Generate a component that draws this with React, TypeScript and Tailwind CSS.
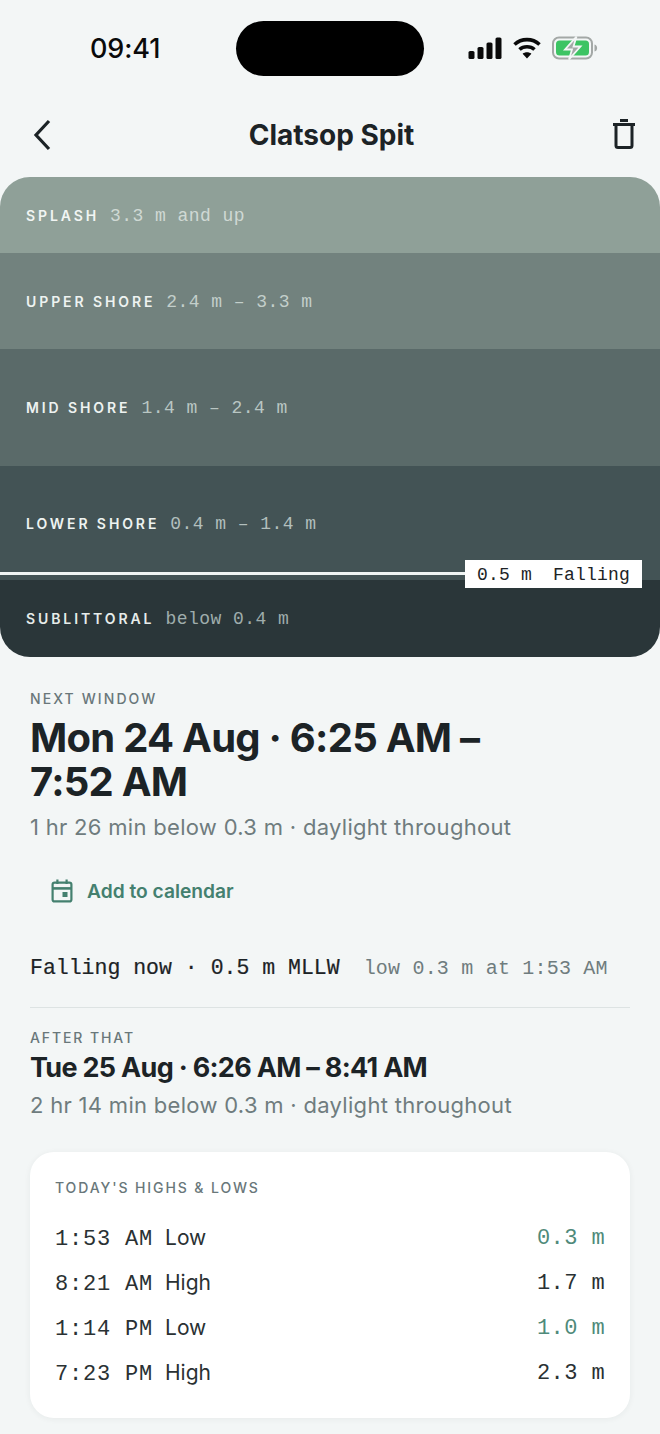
const mono = "font-['Liberation_Mono',monospace]"
const sans = "font-['Inter','Liberation_Sans',sans-serif]"

const zones = [
    { name: 'SPLASH', range: '3.3 m and up', h: 'h-[76px]', bg: 'bg-[#8fa098]', label: 'text-[#f1f5f3]', value: 'text-[#cfd9d4]' },
    { name: 'UPPER SHORE', range: '2.4 m – 3.3 m', h: 'h-[96px]', bg: 'bg-[#72827e]', label: 'text-[#eef3f1]', value: 'text-[#c3cfcb]' },
    { name: 'MID SHORE', range: '1.4 m – 2.4 m', h: 'h-[117px]', bg: 'bg-[#5a6a69]', label: 'text-[#eef3f1]', value: 'text-[#b9c6c3]' },
    { name: 'LOWER SHORE', range: '0.4 m – 1.4 m', h: 'h-[114px]', bg: 'bg-[#435355]', label: 'text-[#eef3f1]', value: 'text-[#b2bfbd]' },
    { name: 'SUBLITTORAL', range: 'below 0.4 m', h: 'h-[77px]', bg: 'bg-[#2a3639]', label: 'text-[#e6ecea]', value: 'text-[#9fadac]' },
]

const tides = [
    { time: '1:53 AM', kind: 'Low', height: '0.3 m', good: true },
    { time: '8:21 AM', kind: 'High', height: '1.7 m', good: false },
    { time: '1:14 PM', kind: 'Low', height: '1.0 m', good: true },
    { time: '7:23 PM', kind: 'High', height: '2.3 m', good: false },
]

function StatusIcons() {
    return (
        <div className="flex items-center gap-[11px]">
            <svg width="34" height="22" viewBox="0 0 34 22" fill="#0a0a0a">
                <rect x="0.5" y="14" width="6" height="8" rx="1.6" />
                <rect x="9.5" y="10" width="6" height="12" rx="1.6" />
                <rect x="18.5" y="5.5" width="6" height="16.5" rx="1.6" />
                <rect x="27.5" y="0.5" width="6" height="21.5" rx="1.6" />
            </svg>
            <svg width="28" height="22" viewBox="0 0 28 22" fill="none" stroke="#0a0a0a" strokeWidth="3.6">
                <path d="M1.5 7.5C8.5 1 19.5 1 26.5 7.5" />
                <path d="M6.5 12.5C10.5 8.8 17.5 8.8 21.5 12.5" />
                <path d="M14 21.5l-4.4-4.8c2.4-2 6.4-2 8.8 0L14 21.5z" fill="#0a0a0a" stroke="none" />
            </svg>
            <svg width="46" height="24" viewBox="0 0 46 24" fill="none">
                <rect x="1" y="1.5" width="39" height="21" rx="6" stroke="#a3a8a6" strokeWidth="2" />
                <rect x="4" y="4.5" width="33" height="15" rx="3.5" fill="#3cc463" />
                <path d="M42.5 8.5c2 .5 2.6 2 2.6 3.5s-.6 3-2.6 3.5z" fill="#a3a8a6" />
                <path d="M24.5 0.6L13 13.5h7L17 23.4l11.5-12.9h-7z" fill="#a3a8a6" stroke="#f3f6f6" strokeWidth="1.8" />
            </svg>
        </div>
    )
}

function CalendarIcon() {
    return (
        <svg width="22" height="24" viewBox="0 0 22 24" fill="none" stroke="#44806f" strokeWidth="2.2">
            <rect x="1.6" y="3.6" width="18.8" height="18.8" rx="2" />
            <path d="M1.6 9.4h18.8" strokeWidth="2.6" />
            <path d="M6.4 0.6v4.4M15.6 0.6v4.4" />
            <rect x="11.5" y="13" width="5" height="5" fill="#44806f" stroke="none" />
        </svg>
    )
}

function TrashIcon() {
    return (
        <svg width="24" height="30" viewBox="0 0 24 30" fill="none" stroke="#1c2326" strokeWidth="3">
            <path d="M1 5.5h22" />
            <path d="M8 1.5h8" strokeWidth="3" />
            <path d="M4 6v20.5a2 2 0 0 0 2 2h12a2 2 0 0 0 2-2V6" />
        </svg>
    )
}

function App() {
    return (
        <div className={`flex h-[1434px] w-[660px] flex-col overflow-hidden bg-[#f3f6f6] text-[#1c2326] ${sans}`}>
            {/* status bar */}
            <div className="flex h-[97px] shrink-0 items-start pl-[90px] pr-[62px] pt-[21px]">
                <span className="mt-[11px] w-[70px] text-[27px] font-medium leading-[34px] tracking-[-0.1px] text-[#0a0a0a]">09:41</span>
                <div className="ml-[76px] h-[55px] w-[188px] rounded-full bg-black" />
                <div className="ml-auto mt-[15px]"><StatusIcons /></div>
            </div>

            {/* nav */}
            <div className="flex h-[80px] shrink-0 items-start justify-between pl-[33px] pr-[24px] pt-[22px]">
                <svg width="18" height="32" viewBox="0 0 18 32" fill="none" stroke="#1c2326" strokeWidth="3.2">
                    <path d="M16 2L3 16l13 14" />
                </svg>
                <h1 className="mt-[-2px] text-[28px] font-bold leading-[36px]">Clatsop Spit</h1>
                <TrashIcon />
            </div>

            {/* tide zones */}
            <div className="relative shrink-0 overflow-hidden rounded-[30px]">
                {zones.map((z) => (
                    <div key={z.name} className={`flex items-center gap-[11px] pl-[26px] ${z.h} ${z.bg}`}>
                        <span className={`text-[14px] font-semibold tracking-[2.9px] ${z.label}`}>{z.name}</span>
                        <span className={`${mono} mt-[2px] text-[18px] tracking-[0.45px] ${z.value}`}>{z.range}</span>
                    </div>
                ))}
                <div className="absolute left-0 top-[395px] h-[3px] w-[470px] bg-[#f0f5f4]" />
                <div className={`absolute left-[465px] top-[383px] flex h-[28px] w-[177px] items-center gap-[21px] bg-white pl-[12px] pt-[2px] text-[18px] tracking-[0.2px] text-[#1c2326] ${mono}`}>
                    <span>0.5 m</span>
                    <span>Falling</span>
                </div>
            </div>

            {/* windows */}
            <div className="flex flex-col px-[30px] pt-[33px]">
                <p className="text-[14px] font-medium leading-[18px] tracking-[2.1px] text-[#69777a]">NEXT WINDOW</p>
                <h2 className="mt-[8px] w-[480px] text-[40px] font-bold leading-[44px] tracking-[-0.75px]">Mon 24 Aug · 6:25 AM – 7:52 AM</h2>
                <p className="mt-[9px] text-[22px] leading-[28px] tracking-[0.3px] text-[#6f7c7e]">1 hr 26 min below 0.3 m · daylight throughout</p>

                <div className="ml-[21px] mt-[36px] flex items-center gap-[14px]">
                    <CalendarIcon />
                    <span className="text-[19.2px] font-semibold leading-[28px] text-[#44806f]">Add to calendar</span>
                </div>

                <div className={`mt-[49px] flex items-baseline gap-[24px] ${mono}`}>
                    <span className="text-[21.5px] leading-[28px] [-webkit-text-stroke:0.2px_currentColor]">Falling now · 0.5 m MLLW</span>
                    <span className="text-[20px] tracking-[0.2px] text-[#6f7c7e]">low 0.3 m at 1:53 AM</span>
                </div>

                <div className="mt-[23px] h-px w-full bg-[#dde3e3]" />

                <p className="mt-[21px] text-[14px] font-medium leading-[18px] tracking-[1.9px] text-[#69777a]">AFTER THAT</p>
                <h3 className="mt-[4px] text-[27px] font-bold leading-[34px] tracking-[-0.7px]">Tue 25 Aug · 6:26 AM – 8:41 AM</h3>
                <p className="mt-[6px] text-[22px] leading-[28px] tracking-[0.3px] text-[#6f7c7e]">2 hr 14 min below 0.3 m · daylight throughout</p>

                {/* highs and lows */}
                <div className="mt-[33px] rounded-[24px] bg-white px-[25px] pb-[22px] pt-[27px] shadow-[0_1px_6px_rgba(30,50,50,0.06)]">
                    <p className="text-[14px] font-medium leading-[18px] tracking-[1.9px] text-[#69777a]">TODAY'S HIGHS &amp; LOWS</p>
                    <div className="mt-[19px] flex flex-col text-[#2a3133]">
                        {tides.map((t) => (
                            <div key={t.time} className="flex h-[45px] items-center justify-between">
                                <div className="flex items-baseline gap-[12px]">
                                    <span className={`${mono} text-[22px] tracking-[0.8px]`}>{t.time}</span>
                                    <span className="text-[21px]">{t.kind}</span>
                                </div>
                                <span className={`${mono} text-[22px] tracking-[0.4px] ${t.good ? 'text-[#4f8a7a]' : ''}`}>{t.height}</span>
                            </div>
                        ))}
                    </div>
                </div>
            </div>
        </div>
    )
}

export default App
